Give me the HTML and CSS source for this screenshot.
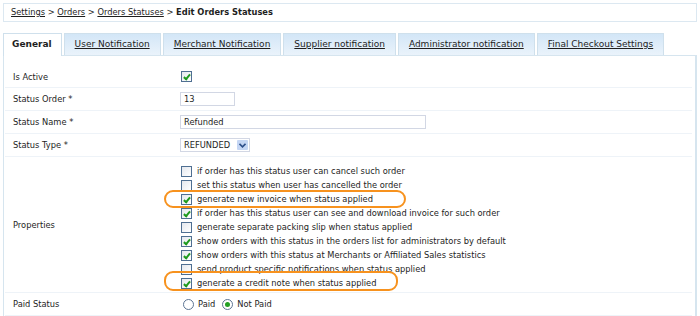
FILE: index.html
```html
<!DOCTYPE html>
<html lang="en">
<head>
    <meta charset="UTF-8">
    <title>Edit Orders Statuses</title>
    <link rel="stylesheet" href="styles.css">
</head>
<body>
    <div class="breadcrumb">
        <a href="#">Settings</a> &gt; <a href="#">Orders</a> &gt; <a href="#">Orders Statuses</a> &gt; <b>Edit Orders Statuses</b>
    </div>

    <ul class="tabs">
        <li class="tab active">General</li>
        <li class="tab"><a href="#">User Notification</a></li>
        <li class="tab"><a href="#">Merchant Notification</a></li>
        <li class="tab"><a href="#">Supplier notification</a></li>
        <li class="tab"><a href="#">Administrator notification</a></li>
        <li class="tab"><a href="#">Final Checkout Settings</a></li>
    </ul>

    <div class="panel">
        <div class="row first">
            <div class="label">Is Active</div>
            <div class="value"><span class="cb checked"></span></div>
        </div>
        <div class="row">
            <div class="label">Status Order *</div>
            <div class="value"><span class="input short">13</span></div>
        </div>
        <div class="row">
            <div class="label">Status Name *</div>
            <div class="value"><span class="input long">Refunded</span></div>
        </div>
        <div class="row">
            <div class="label">Status Type *</div>
            <div class="value">
                <span class="select">REFUNDED
                    <span class="arrow">
                        <svg width="7" height="5" viewBox="0 0 7 5"><path d="M0.5 0.8 L3.5 3.8 L6.5 0.8" fill="none" stroke="#2d4f8a" stroke-width="1.6"/></svg>
                    </span>
                </span>
            </div>
        </div>
        <div class="row props">
            <div class="label">Properties</div>
            <div class="value">
                <ul class="checks">
                    <li><span class="cb"></span>if order has this status user can cancel such order</li>
                    <li><span class="cb"></span>set this status when user has cancelled the order</li>
                    <li class="mark mark-one"><span class="cb checked"></span>generate new invoice when status applied</li>
                    <li><span class="cb checked"></span>if order has this status user can see and download invoice for such order</li>
                    <li><span class="cb"></span>generate separate packing slip when status applied</li>
                    <li><span class="cb checked"></span>show orders with this status in the orders list for administrators by default</li>
                    <li><span class="cb checked"></span>show orders with this status at Merchants or Affiliated Sales statistics</li>
                    <li><span class="cb"></span>send product specific notifications when status applied</li>
                    <li class="mark mark-two"><span class="cb checked"></span>generate a credit note when status applied</li>
                </ul>
            </div>
        </div>
        <div class="row">
            <div class="label">Paid Status</div>
            <div class="value radios">
                <label class="option"><span class="radio"></span>Paid</label>
                <label class="option"><span class="radio on"></span>Not Paid</label>
            </div>
        </div>
    </div>
</body>
</html>
```

FILE: styles.css
```css
body {
    margin: 3px;
    background: #fff;
    font-family: "DejaVu Sans", Verdana, sans-serif;
    font-size: 8.3px;
    color: #1e1e1e;
}
a { color: #1e1e1e; }

.breadcrumb {
    height: 17px;
    line-height: 17px;
    border: 1px solid #dce8f1;
    padding: 0 7px;
}

.tabs {
    list-style: none;
    margin: 11px 0 0;
    padding: 0;
    display: flex;
    gap: 2px;
    position: relative;
    z-index: 1;
    font-size: 9px;
}
.tab {
    height: 21px;
    line-height: 21px;
    padding: 0 10px;
    border: 1px solid #cfe0ec;
    border-bottom: none;
    background: linear-gradient(to bottom, #d3e6f7, #eaf3fb);
}
.tab.active {
    background: #fff;
    font-weight: bold;
    height: 22px;
    margin-bottom: -1px;
    padding: 0 9px 0 8px;
}

.panel {
    border: 1px solid #d6e5ef;
    border-right-width: 2px;
    padding: 0 3px 0 1px;
}
.row {
    display: grid;
    grid-template-columns: 175px 1fr;
    align-items: center;
    height: 22px;
    border-bottom: 1px solid #eef3f8;
}
.row.first {
    height: 30px;
    padding-top: 1px;
    align-items: end;
}
.row.first .label, .row.first .value { padding-bottom: 5px; }
.label { padding-left: 8px; }

.cb {
    display: inline-block;
    width: 9px;
    height: 9px;
    border: 1px solid #4f6f92;
    background: linear-gradient(135deg, #e4e8ee, #fff);
    vertical-align: middle;
    margin: 0 5px 0 1px;
    position: relative;
}
.cb.checked::after {
    content: "";
    position: absolute;
    left: 3px;
    top: 1px;
    width: 2px;
    height: 5px;
    border: solid #1e9a1e;
    border-width: 0 2px 2px 0;
    transform: rotate(40deg);
}

.input {
    display: inline-block;
    box-sizing: border-box;
    height: 14px;
    line-height: 12px;
    border: 1px solid #d2d7e4;
    padding: 0 3px;
}
.input.short { width: 55px; }
.input.long { width: 246px; }

.select {
    display: inline-flex;
    align-items: center;
    justify-content: space-between;
    box-sizing: border-box;
    width: 70px;
    height: 14px;
    border: 1px solid #d2d7e4;
    padding: 0 1px 0 3px;
}
.arrow {
    display: inline-flex;
    align-items: center;
    justify-content: center;
    width: 11px;
    height: 10px;
    background: #c4d6f4;
    border-radius: 1px;
}

.row.props {
    height: auto;
    padding: 7px 0 2px;
}
.props .label { padding-bottom: 4px; }
.checks {
    list-style: none;
    margin: 0;
    padding: 0;
}
.checks li {
    height: 14px;
    line-height: 14px;
    position: relative;
    white-space: nowrap;
}
.mark::before {
    content: "";
    position: absolute;
    left: -16px;
    border: 2px solid #f7921e;
    border-radius: 9px;
}
.mark-one::before { top: -2px; width: 238px; height: 14px; }
.mark-two::before { top: -5px; width: 230px; height: 16px; }

.radios { display: flex; align-items: center; gap: 7px; }
.option { display: inline-flex; align-items: center; }
.radio {
    display: inline-block;
    box-sizing: border-box;
    width: 11px;
    height: 11px;
    border: 1px solid #5d7593;
    border-radius: 50%;
    margin-right: 4px;
    position: relative;
    background: #fff;
}
.option:first-child .radio { margin-left: 3px; }
.radio.on::after {
    content: "";
    position: absolute;
    left: 2px;
    top: 2px;
    width: 5px;
    height: 5px;
    border-radius: 50%;
    background: #24a024;
}
```
